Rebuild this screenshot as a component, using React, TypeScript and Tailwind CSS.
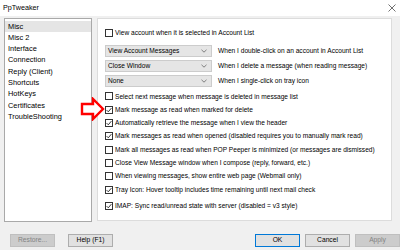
import React from 'react';

const pages = ['Misc', 'Misc 2', 'Interface', 'Connection', 'Reply (Client)', 'Shortcuts', 'HotKeys', 'Certificates', 'TroubleShooting'];

const dropdowns = [
  { value: 'View Account Messages', label: 'When I double-click on an account in Account List' },
  { value: 'Close Window', label: 'When I delete a message (when reading message)' },
  { value: 'None', label: 'When I single-click on tray icon' },
];

const options = [
  { text: 'Select next message when message is deleted in message list', checked: false },
  { text: 'Mark message as read when marked for delete', checked: true },
  { text: 'Automatically retrieve the message when I view the header', checked: true },
  { text: 'Mark messages as read when opened (disabled requires you to manually mark read)', checked: true },
  { text: 'Mark all messages as read when POP Peeper is minimized (or messages are dismissed)', checked: false },
  { text: 'Close View Message window when I compose (reply, forward, etc.)', checked: false },
  { text: 'When viewing messages, show entire web page (Webmail only)', checked: false },
  { text: 'Tray Icon: Hover tooltip includes time remaining until next mail check', checked: true },
];

const Check: React.FC<{ checked: boolean; text: string }> = ({ checked, text }) => (
  <div className="flex items-center h-[13.3px]">
    <div className="w-[8px] h-[8px] border border-[#333333] bg-white flex items-center justify-center shrink-0">
      {checked && (
        <svg width="6" height="6" viewBox="0 0 6 6">
          <path d="M0.6 3.1 L2.3 4.8 L5.4 1.1" fill="none" stroke="#222" strokeWidth="0.9" />
        </svg>
      )}
    </div>
    <span className="ml-[2px] whitespace-nowrap">{text}</span>
  </div>
);

const Button: React.FC<{ label: string; disabled?: boolean; primary?: boolean; className?: string }> = ({ label, disabled, primary, className }) => (
  <div
    className={
      'h-[13px] w-[45px] flex items-center justify-center border text-[6.7px] ' +
      (disabled
        ? 'bg-[#cccccc] border-[#bfbfbf] text-[#838383]'
        : primary
        ? 'bg-[#e1e1e1] border-[#0078d7] text-black'
        : 'bg-[#e1e1e1] border-[#adadad] text-black') +
      ' ' +
      (className ?? '')
    }
  >
    {label}
  </div>
);

export default function App() {
  return (
    <div
      className="relative w-[400px] h-[250px] overflow-hidden bg-[#f0f0f0] text-black flex flex-col"
      style={{ fontFamily: '"Liberation Sans", Arial, sans-serif' }}
    >
      {/* title bar */}
      <div className="h-[16px] bg-white flex items-center justify-between px-[3px] shrink-0">
        <span className="text-[7.2px]">PpTweaker</span>
        <svg width="8" height="8" viewBox="0 0 8 8" className="mr-[1px]">
          <path d="M0.5 0.5 L7.5 7.5 M7.5 0.5 L0.5 7.5" stroke="#333" strokeWidth="0.7" />
        </svg>
      </div>

      {/* main area */}
      <div className="flex mt-[2px] h-[204px] shrink-0">
        <div className="ml-[4px] w-[88px] bg-white border border-[#a9a9a9] pt-[1.5px] text-[7.4px]">
          {pages.map((p, i) => (
            <div key={p} className={'h-[11.3px] flex items-center pl-[3px] ' + (i === 0 ? 'bg-[#e5e5e5]' : '')}>
              {p}
            </div>
          ))}
        </div>

        <div className="ml-[5px] w-[295px] h-[203px] bg-white border border-[#dcdcdc] pl-[7px] text-[6.6px]">
          <div className="mt-[7.5px]">
            <Check checked={false} text="View account when it is selected in Account List" />
          </div>

          <div className="mt-[5.5px] flex flex-col gap-[3px]">
            {dropdowns.map((d) => (
              <div key={d.value} className="flex items-center h-[12px]">
                <div className="w-[107px] h-[12px] bg-[#e5e5e5] border border-[#cccccc] flex items-center justify-between pl-[2px] pr-[4px]">
                  <span className="whitespace-nowrap">{d.value}</span>
                  <svg width="6" height="4" viewBox="0 0 6 4">
                    <path d="M0.5 0.8 L3 3.2 L5.5 0.8" fill="none" stroke="#555" strokeWidth="0.7" />
                  </svg>
                </div>
                <span className="ml-[6px] whitespace-nowrap">{d.label}</span>
              </div>
            ))}
          </div>

          <div className="mt-[2.5px] flex flex-col">
            {options.map((o) => (
              <Check key={o.text} checked={o.checked} text={o.text} />
            ))}
          </div>

          <div className="mt-[3.6px]">
            <Check checked text="IMAP: Sync read/unread state with server (disabled = v3 style)" />
          </div>
        </div>
      </div>

      {/* buttons */}
      <div className="flex items-center mt-[12px] h-[13px] shrink-0">
        <Button label="Restore..." disabled className="ml-[10px] w-[40px]" />
        <Button label="Help (F1)" className="ml-[13px]" />
        <Button label="OK" primary className="ml-[142px]" />
        <Button label="Cancel" className="ml-[5px]" />
        <Button label="Apply" disabled className="ml-[5px]" />
      </div>

      {/* red annotation arrow */}
      <svg className="absolute left-[80px] top-[97px]" width="26" height="24" viewBox="0 0 26 24">
        <path
          d="M2 7 L13 7 L13 2 L23 12 L13 22 L13 17 L2 17 Z"
          fill="white"
          stroke="#ff0000"
          strokeWidth="2.4"
          strokeLinejoin="miter"
        />
      </svg>
    </div>
  );
}
